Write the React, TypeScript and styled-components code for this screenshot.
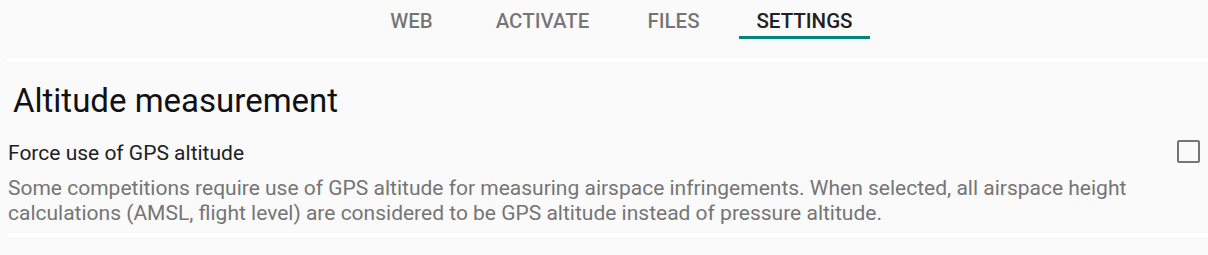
import React, { useState } from 'react';
import styled, { createGlobalStyle } from 'styled-components';

const GlobalStyle = createGlobalStyle`
  html, body {
    margin: 0;
    padding: 0;
    background: #fafafa;
    font-family: Roboto, 'Noto Sans', sans-serif;
  }
`;

const tabs = ['WEB', 'ACTIVATE', 'FILES', 'SETTINGS'];

export default function App() {
  const [active, setActive] = useState(3);
  const [forceGps, setForceGps] = useState(false);

  return (
    <Page>
      <GlobalStyle />
      <TabBar>
        {tabs.map((t, i) => (
          <Tab key={t} active={i === active} onClick={() => setActive(i)}>
            {t}
          </Tab>
        ))}
      </TabBar>
      <Divider />
      <SectionTitle>Altitude measurement</SectionTitle>
      <PrefRow onClick={() => setForceGps(!forceGps)}>
        <PrefText>
          <PrefTitle>Force use of GPS altitude</PrefTitle>
          <PrefSummary>
            Some competitions require use of GPS altitude for measuring airspace infringements. When selected, all
            airspace height calculations (AMSL, flight level) are considered to be GPS altitude instead of pressure
            altitude.
          </PrefSummary>
        </PrefText>
        <CheckBox checked={forceGps} />
      </PrefRow>
      <Divider />
    </Page>
  );
}

const Page = styled.div`
  width: 1208px;
  height: 255px;
  overflow: hidden;
`;

const TabBar = styled.div`
  display: flex;
  justify-content: center;
  height: 39px;
  padding: 0 0 19px 8px;
`;

const Tab = styled.div<{ active: boolean }>`
  width: 131px;
  display: flex;
  align-items: flex-start;
  justify-content: center;
  box-sizing: border-box;
  padding-top: 9px;
  font-size: 20.5px;
  line-height: 24px;
  font-weight: 500;
  color: ${(p) => (p.active ? '#212121' : 'rgba(0, 0, 0, 0.54)')};
  border-bottom: 3px solid ${(p) => (p.active ? '#008577' : 'transparent')};
  cursor: pointer;
`;

const Divider = styled.div`
  height: 4px;
  margin-left: 7px;
  background: #ffffff;
`;

const SectionTitle = styled.h1`
  margin: 19px 0 0 13px;
  font-size: 33px;
  font-weight: 400;
  color: #111;
  line-height: 40px;
`;

const PrefRow = styled.div`
  display: flex;
  align-items: flex-start;
  padding: 20px 8px 7px 8px;
  cursor: pointer;
`;

const PrefText = styled.div`
  flex: 1;
`;

const PrefTitle = styled.div`
  font-size: 21px;
  line-height: 24px;
  color: #212121;
`;

const PrefSummary = styled.div`
  margin-top: 11px;
  font-size: 21px;
  line-height: 25px;
  color: #757575;
  max-width: 1130px;
`;

const CheckBox = styled.div<{ checked: boolean }>`
  width: 23px;
  height: 23px;
  box-sizing: border-box;
  border: 2px solid #757575;
  border-radius: 2px;
  margin-top: -1px;
  background: ${(p) => (p.checked ? '#008577' : 'transparent')};
`;
